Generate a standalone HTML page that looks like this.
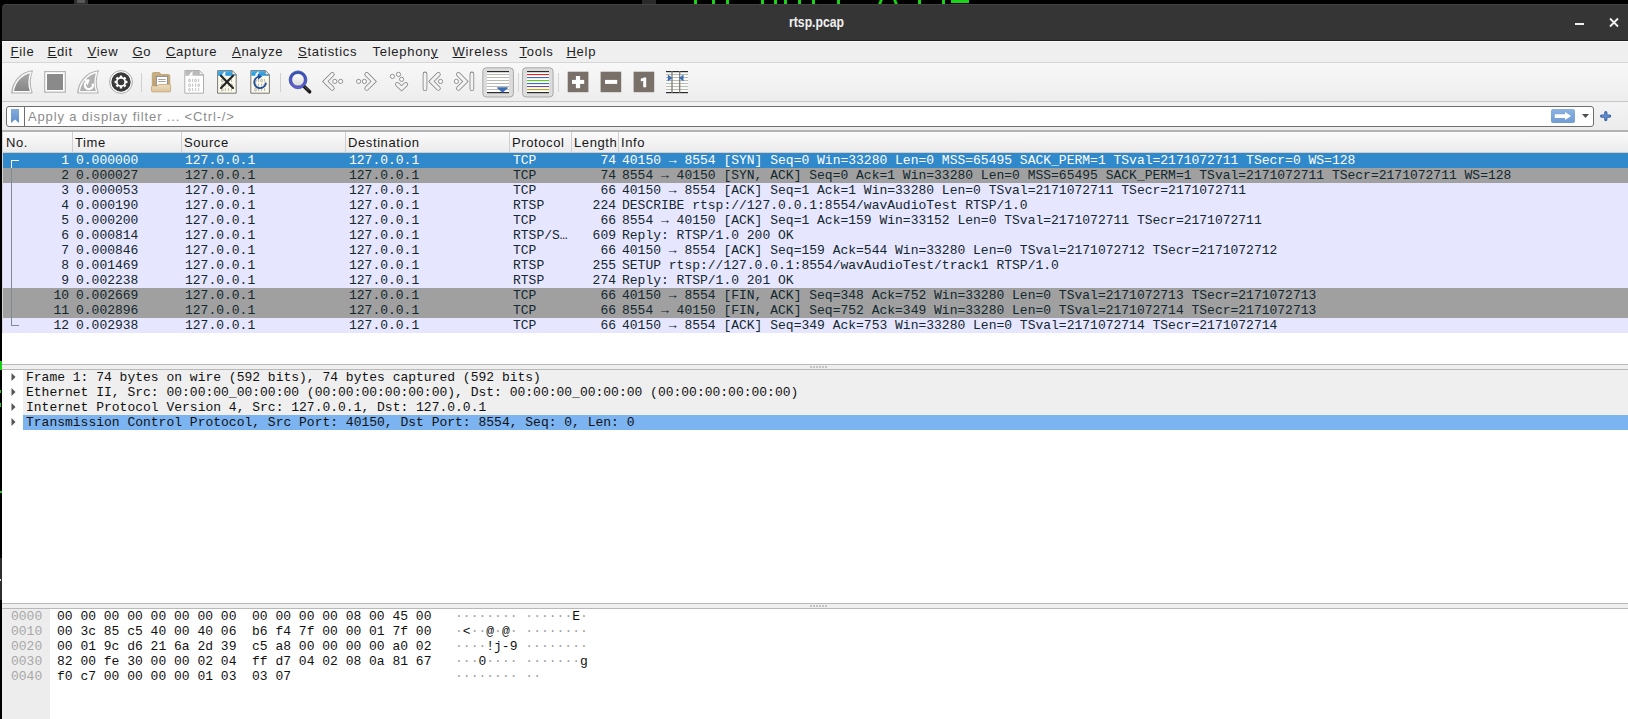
<!DOCTYPE html>
<html><head><meta charset="utf-8">
<style>
*{margin:0;padding:0;box-sizing:border-box}
html,body{width:1628px;height:719px;overflow:hidden;background:#000}
body{position:relative;font-family:"Liberation Sans",sans-serif}
.a{position:absolute}
.m{font-family:"Liberation Mono",monospace;font-size:13px;line-height:15px;white-space:pre;position:absolute}
.mi{position:absolute;top:44px;font-size:13px;line-height:15px;color:#1e1e1e;letter-spacing:0.72px;white-space:pre}
.mi u{text-decoration:underline;text-underline-offset:1px;text-decoration-thickness:1px}
.hd{position:absolute;top:132px;height:20px;font-size:13px;line-height:15px;color:#161616;letter-spacing:0.6px;white-space:pre;padding-top:3px}
.row{position:absolute;left:3px;width:1625px;height:15px;color:#12272e}
.sel{background:#3089cb;color:#fff}
.g{background:#a0a0a0}
.p{background:#e7e6ff}
svg{position:absolute;overflow:visible}
</style></head><body>

<div class="a" style="left:2px;top:4px;width:1626px;height:37px;background:#353535;border-top-left-radius:4px;border-bottom:1px solid #1f1f1f;border-top:1px solid #424242"></div>
<div class="a" style="left:789px;top:13px;width:56px;height:18px;overflow:visible;white-space:nowrap"><span style="display:inline-block;transform-origin:0 0;transform:scaleX(0.815);font-size:15px;line-height:18px;font-weight:bold;color:#f0f0f0">rtsp.pcap</span></div>
<div class="a" style="left:1575px;top:23px;width:9px;height:2px;background:#f0f0f0"></div>
<svg style="left:1609px;top:18px" width="10" height="9"><path d="M1 0.5 L9 8.5 M9 0.5 L1 8.5" stroke="#f0f0f0" stroke-width="1.8"/></svg>
<div class="a" style="left:74px;top:0;width:14px;height:4px;background:#2e2e2e"></div>
<div class="a" style="left:77px;top:0;width:8px;height:3px;background:#585858"></div>
<div class="a" style="left:642px;top:0;width:14px;height:4px;background:#2a2a2a"></div>
<div class="a" style="left:694px;top:0;width:3px;height:4px;background:#1ad21a"></div>
<div class="a" style="left:712px;top:0;width:3px;height:4px;background:#1ad21a"></div>
<div class="a" style="left:726px;top:0;width:3px;height:4px;background:#1ad21a"></div>
<div class="a" style="left:761px;top:0;width:3px;height:4px;background:#1ad21a"></div>
<div class="a" style="left:774px;top:0;width:3px;height:4px;background:#1ad21a"></div>
<div class="a" style="left:784px;top:0;width:3px;height:4px;background:#1ad21a"></div>
<div class="a" style="left:798px;top:0;width:3px;height:4px;background:#1ad21a"></div>
<div class="a" style="left:812px;top:0;width:3px;height:4px;background:#1ad21a"></div>
<div class="a" style="left:837px;top:0;width:3px;height:4px;background:#1ad21a"></div>
<div class="a" style="left:942px;top:0;width:3px;height:4px;background:#1ad21a"></div>
<div class="a" style="left:918px;top:0;width:3px;height:4px;background:#1ad21a"></div>
<div class="a" style="left:879px;top:0;width:3px;height:4px;background:#1ad21a;transform:skewX(-20deg)"></div>
<div class="a" style="left:894px;top:0;width:3px;height:4px;background:#1ad21a;transform:skewX(20deg)"></div>
<div class="a" style="left:951px;top:0;width:18px;height:3px;background:#1ad21a"></div>
<div class="a" style="left:2px;top:41px;width:1626px;height:21px;background:#efefef;border-top:1px solid #fafafa"></div>
<div class="a" style="left:2px;top:62px;width:1626px;height:1px;background:#d6d6d6"></div>
<span class="mi" style="left:10.5px"><u>F</u>ile</span>
<span class="mi" style="left:47.5px"><u>E</u>dit</span>
<span class="mi" style="left:87.5px"><u>V</u>iew</span>
<span class="mi" style="left:132.5px"><u>G</u>o</span>
<span class="mi" style="left:166px"><u>C</u>apture</span>
<span class="mi" style="left:232px"><u>A</u>nalyze</span>
<span class="mi" style="left:298px"><u>S</u>tatistics</span>
<span class="mi" style="left:372.5px">Telephon<u>y</u></span>
<span class="mi" style="left:452.5px"><u>W</u>ireless</span>
<span class="mi" style="left:519.5px"><u>T</u>ools</span>
<span class="mi" style="left:566.5px"><u>H</u>elp</span>
<div class="a" style="left:2px;top:63px;width:1626px;height:38px;background:linear-gradient(#f8f8f8,#ededed)"></div>
<div class="a" style="left:2px;top:101px;width:1626px;height:1px;background:#c6c6c6"></div>
<svg style="left:0;top:0" width="700" height="102" viewBox="0 0 700 102">
<defs>
<linearGradient id="fin" x1="0" y1="0" x2="0" y2="1"><stop offset="0" stop-color="#a9a9a9"/><stop offset="1" stop-color="#858585"/></linearGradient>
<linearGradient id="fold" x1="0" y1="0" x2="0" y2="1"><stop offset="0" stop-color="#c9b184"/><stop offset="1" stop-color="#b89b68"/></linearGradient>
<linearGradient id="front" x1="0" y1="0" x2="0" y2="1"><stop offset="0" stop-color="#eddcbf"/><stop offset="1" stop-color="#dcc39c"/></linearGradient>
<linearGradient id="ring" x1="0" y1="0" x2="0" y2="1"><stop offset="0" stop-color="#3550b8"/><stop offset="1" stop-color="#6460d6"/></linearGradient>
<linearGradient id="lens" x1="0" y1="0" x2="0" y2="1"><stop offset="0" stop-color="#ffffff"/><stop offset="1" stop-color="#d8d8d8"/></linearGradient>
<linearGradient id="blueband" x1="0" y1="0" x2="0" y2="1"><stop offset="0" stop-color="#49aee8"/><stop offset="1" stop-color="#1d95dc"/></linearGradient>
</defs>
<!-- start fin -->
<path d="M11.8 92.8 C12.8 82 20 72.5 32.3 70.8 C29.6 77.5 29.6 86 32 92.8 Z" fill="url(#fin)" stroke="#b3b3b3" stroke-width="1.3" stroke-linejoin="round"/>
<path d="M13.3 91.8 C14.3 82.6 20.8 74.2 30.9 72.2 C28.5 79 28.5 86 30.7 91.8 Z" fill="url(#fin)" stroke="#fafafa" stroke-width="1.4" stroke-linejoin="round"/>
<!-- stop -->
<rect x="44.7" y="71.6" width="20.6" height="20.6" fill="#fff" stroke="#b3b3b3" stroke-width="1.2"/>
<rect x="47" y="74" width="16" height="16" fill="#8a8a8a"/>
<!-- restart fin -->
<path d="M77.8 92.8 C78.8 82 86 72.5 98.3 70.8 C95.6 77.5 95.6 86 98 92.8 Z" fill="#b1b1b1" stroke="#b3b3b3" stroke-width="1.3" stroke-linejoin="round"/>
<path d="M79.3 91.8 C80.3 82.6 86.8 74.2 96.9 72.2 C94.5 79 94.5 86 96.7 91.8 Z" fill="#b1b1b1" stroke="#fafafa" stroke-width="1.4" stroke-linejoin="round"/>
<path d="M87 81.6 A4 4 0 1 0 92.6 83.6" fill="none" stroke="#fff" stroke-width="2.3"/>
<path d="M84.4 79.2 L89.8 79.6 L87.6 85.4 Z" fill="#fff"/>
<!-- gear -->
<circle cx="121" cy="82" r="11.4" fill="#fff" stroke="#a0a0a0" stroke-width="0.9"/>
<circle cx="121" cy="82" r="9.7" fill="#3a3a3a"/>
<g fill="#fff">
<circle cx="121" cy="82" r="5"/>
<rect x="119.8" y="75.6" width="2.4" height="12.8" rx="0.5"/>
<rect x="119.8" y="75.6" width="2.4" height="12.8" rx="0.5" transform="rotate(45 121 82)"/>
<rect x="119.8" y="75.6" width="2.4" height="12.8" rx="0.5" transform="rotate(90 121 82)"/>
<rect x="119.8" y="75.6" width="2.4" height="12.8" rx="0.5" transform="rotate(135 121 82)"/>
</g>
<circle cx="121" cy="82" r="3.3" fill="#3a3a3a"/>
<!-- separator -->
<rect x="141" y="73" width="1" height="19" fill="#d0d0d0"/>
<!-- folder -->
<path d="M152.3 91 V73.8 Q152.3 72.5 153.6 72.5 H159.5 L161.2 74.5 H168.6 Q169.8 74.5 169.8 75.8 V91 Z" fill="url(#fold)" stroke="#b8a070" stroke-width="0.8"/>
<rect x="156.4" y="76.4" width="11" height="9" fill="#fff" stroke="#8a8a8a" stroke-width="0.9"/>
<rect x="158.2" y="79" width="7.4" height="0.9" fill="#9a9a90"/>
<rect x="158.2" y="81.1" width="7.4" height="0.9" fill="#9a9a90"/>
<path d="M151.5 87 Q151.5 86 152.5 86 H157 L158.8 84.5 H169.5 Q170.6 84.5 170.6 85.5 V90.8 Q170.6 91.9 169.5 91.9 H152.6 Q151.5 91.9 151.5 90.8 Z" fill="url(#front)" stroke="#c3a878" stroke-width="0.8"/>
<!-- doc grey -->
<path d="M184.8 70.5 H199.3 L203.5 74.7 V93.2 H184.8 Z" fill="#fff" stroke="#b0b0b0" stroke-width="1"/>
<path d="M185.3 71 H199 L203 75 V75.8 H185.3 Z" fill="#bababa"/>
<path d="M189 75.8 C189.5 73.5 191 72 193 71.2 C192.3 72.8 192.3 74.5 192.8 75.8 Z" fill="#fff"/>
<path d="M199.3 70.5 V74.7 H203.5 Z" fill="#f3f3f3" stroke="#b0b0b0" stroke-width="0.8"/>
<g fill="none" stroke="#a8a8a8" stroke-width="0.7"><rect x="188.65" y="79.25" width="1.7" height="2.6" rx="0.8"/><path d="M192.55 78.90 V81.90"/><rect x="194.75" y="79.25" width="1.7" height="2.6" rx="0.8"/><path d="M198.65 78.90 V81.90"/><rect x="188.65" y="83.95" width="1.7" height="2.6" rx="0.8"/><path d="M192.55 83.60 V86.60"/><path d="M195.60 83.60 V86.60"/><rect x="197.80" y="83.95" width="1.7" height="2.6" rx="0.8"/><rect x="188.65" y="88.45" width="1.7" height="2.6" rx="0.8"/><path d="M192.55 88.10 V91.10"/><path d="M195.60 88.10 V91.10"/><path d="M198.65 88.10 V91.10"/></g>
<!-- doc X -->
<path d="M217.6 70.6 H232.2 L236.2 74.6 V93.2 H217.6 Z" fill="#fbfaea" stroke="#787878" stroke-width="1"/>
<path d="M218.1 71.1 H232 L235.7 74.8 V75.8 H218.1 Z" fill="url(#blueband)"/>
<path d="M221.8 75.8 C222.3 73.5 223.8 72 225.8 71.2 C225.1 72.8 225.1 74.5 225.6 75.8 Z" fill="#fff"/>
<path d="M232.2 70.6 V74.6 H236.2 Z" fill="#f5f5f5" stroke="#787878" stroke-width="0.7"/>
<g fill="none" stroke="#9a9a90" stroke-width="0.7"><rect x="221.45" y="79.25" width="1.7" height="2.6" rx="0.8"/><path d="M225.35 78.90 V81.90"/><rect x="227.55" y="79.25" width="1.7" height="2.6" rx="0.8"/><path d="M231.45 78.90 V81.90"/><rect x="221.45" y="83.95" width="1.7" height="2.6" rx="0.8"/><path d="M225.35 83.60 V86.60"/><path d="M228.40 83.60 V86.60"/><rect x="230.60" y="83.95" width="1.7" height="2.6" rx="0.8"/><rect x="221.45" y="88.45" width="1.7" height="2.6" rx="0.8"/><path d="M225.35 88.10 V91.10"/><path d="M228.40 88.10 V91.10"/><path d="M231.45 88.10 V91.10"/></g>
<path d="M221 75.8 L233 88 M233 75.8 L221 88" stroke="#232323" stroke-width="2.1" stroke-linecap="round"/>
<!-- doc reload -->
<path d="M250.8 70.6 H265.4 L269.4 74.6 V93.2 H250.8 Z" fill="#fbfaea" stroke="#787878" stroke-width="1"/>
<path d="M251.3 71.1 H265.2 L268.9 74.8 V75.8 H251.3 Z" fill="url(#blueband)"/>
<path d="M255 75.8 C255.5 73.5 257 72 259 71.2 C258.3 72.8 258.3 74.5 258.8 75.8 Z" fill="#fff"/>
<path d="M265.4 70.6 V74.6 H269.4 Z" fill="#f5f5f5" stroke="#787878" stroke-width="0.7"/>
<g fill="none" stroke="#9a9a90" stroke-width="0.7"><rect x="254.65" y="79.25" width="1.7" height="2.6" rx="0.8"/><path d="M258.55 78.90 V81.90"/><rect x="260.75" y="79.25" width="1.7" height="2.6" rx="0.8"/><path d="M264.65 78.90 V81.90"/><rect x="254.65" y="83.95" width="1.7" height="2.6" rx="0.8"/><path d="M258.55 83.60 V86.60"/><path d="M261.60 83.60 V86.60"/><rect x="263.80" y="83.95" width="1.7" height="2.6" rx="0.8"/><rect x="254.65" y="88.45" width="1.7" height="2.6" rx="0.8"/><path d="M258.55 88.10 V91.10"/><path d="M261.60 88.10 V91.10"/><path d="M264.65 88.10 V91.10"/></g>
<path d="M259 76.6 A5.8 5.8 0 1 0 265.9 82.6" fill="none" stroke="#1d4c9c" stroke-width="1.9"/>
<path d="M257.8 73.8 L262.2 76.6 L258 79.4 Z" fill="#1d4c9c"/>
<!-- separator -->
<rect x="280" y="73" width="1" height="19" fill="#d0d0d0"/>
<!-- magnifier -->
<path d="M303.4 85.8 L309.6 91.8" stroke="#1c1c1c" stroke-width="3.6" stroke-linecap="round"/>
<path d="M304.6 86.4 L308.6 90.2" stroke="#7a6a5a" stroke-width="0.8"/>
<circle cx="298" cy="79.8" r="6.6" fill="url(#lens)"/>
<circle cx="298" cy="79.8" r="7.6" fill="none" stroke="url(#ring)" stroke-width="2.6"/>
<circle cx="298" cy="79.8" r="8.9" fill="none" stroke="#2a44a0" stroke-width="0.7"/>
<circle cx="298" cy="79.8" r="6.3" fill="none" stroke="#26337a" stroke-width="0.6"/>
<!-- chevrons -->
<g fill="none" stroke-linecap="round" stroke-linejoin="miter">
<g stroke="#808080" stroke-width="4.6">
<path d="M332.3 74.4 L325.3 81.4 L332.3 88.4"/>
<path d="M366.7 74.4 L373.7 81.4 L366.7 88.4"/>
<path d="M397.4 84.4 L401.6 88.4 L405.8 84.4"/>
<path d="M425 73.9 V88.8"/>
<path d="M438.4 74.4 L431.4 81.4 L438.4 88.4"/>
<path d="M471.9 73.9 V88.8"/>
<path d="M458.4 74.4 L465.4 81.4 L458.4 88.4"/>
</g>
<g stroke="#f3f3f3" stroke-width="3">
<path d="M332.3 74.4 L325.3 81.4 L332.3 88.4"/>
<path d="M366.7 74.4 L373.7 81.4 L366.7 88.4"/>
<path d="M397.4 84.4 L401.6 88.4 L405.8 84.4"/>
<path d="M425 73.9 V88.8"/>
<path d="M438.4 74.4 L431.4 81.4 L438.4 88.4"/>
<path d="M471.9 73.9 V88.8"/>
<path d="M458.4 74.4 L465.4 81.4 L458.4 88.4"/>
</g>
</g>
<g fill="#fafafa" stroke="#858585" stroke-width="0.9">
<circle cx="334.8" cy="81.4" r="2.1"/><circle cx="340.6" cy="81.4" r="2.1"/>
<circle cx="358.6" cy="81.4" r="2.1"/><circle cx="364.4" cy="81.4" r="2.1"/>
<circle cx="392.4" cy="76.4" r="2.1"/><circle cx="398.5" cy="74.4" r="2.1"/><circle cx="401.6" cy="79.3" r="2.1"/>
<circle cx="440.5" cy="81.4" r="2.1"/>
<circle cx="456.4" cy="81.4" r="2.1"/>
</g>
<!-- autoscroll toggle -->
<rect x="482.8" y="67.8" width="30.6" height="29.2" rx="3.5" fill="#dcdcdc" stroke="#a9a9a9" stroke-width="1"/>
<rect x="487" y="72" width="22" height="20.5" fill="#fff"/>
<g fill="#b9bcb2"><rect x="487" y="74" width="22" height="1"/><rect x="487" y="77" width="22" height="1"/><rect x="487" y="80" width="22" height="1"/><rect x="487" y="83" width="22" height="1"/><rect x="487" y="86" width="22" height="1"/><rect x="487" y="89" width="22" height="1"/></g>
<rect x="487" y="71" width="22" height="1.2" fill="#2a2a2a"/><rect x="487" y="92" width="22" height="1.2" fill="#2a2a2a"/>
<path d="M497.6 87.3 H507.4 Q508.4 87.3 507.6 88.2 L502.5 92.8 L497.4 88.2 Q496.6 87.3 497.6 87.3 Z" fill="#3a6db5"/>
<rect x="518" y="73" width="1" height="19" fill="#d6d6d6"/>
<!-- colorize toggle -->
<rect x="522.5" y="67.8" width="30.6" height="29.2" rx="3.5" fill="#dcdcdc" stroke="#a9a9a9" stroke-width="1"/>
<rect x="527" y="72" width="22" height="20.5" fill="#fff"/>
<rect x="527" y="71" width="22" height="1.2" fill="#2a2a2a"/>
<rect x="527" y="74" width="22" height="1.1" fill="#ec2424"/>
<rect x="527" y="77" width="22" height="1.1" fill="#3b6db8"/>
<rect x="527" y="80" width="22" height="1.1" fill="#5fcf12"/>
<rect x="527" y="83" width="22" height="1.1" fill="#3b6db8"/>
<rect x="527" y="86" width="22" height="1.1" fill="#6d4c8e"/>
<rect x="527" y="89" width="22" height="1.1" fill="#c9a208"/>
<rect x="527" y="92" width="22" height="1.2" fill="#2a2a2a"/>
<rect x="558" y="73" width="1" height="19" fill="#d6d6d6"/>
<!-- zoom icons -->
<rect x="567.7" y="71.7" width="20.7" height="20.5" fill="#7a706a"/>
<rect x="572" y="79.9" width="12.2" height="4" fill="#fff"/><rect x="575.9" y="76" width="4.2" height="12.2" fill="#fff"/>
<rect x="600.6" y="71.7" width="20.6" height="20.5" fill="#7a706a"/>
<rect x="605" y="79.9" width="12.2" height="4" fill="#fff"/>
<rect x="633.6" y="71.7" width="20.6" height="20.5" fill="#7a706a"/>
<path d="M640.8 78.8 L644.2 77.4 H646.2 V87.2 H643.2 V80.8 L640.8 81.6 Z" fill="#fff"/>
<!-- resize columns -->
<rect x="666" y="71.5" width="22" height="21" fill="#fafafa"/>
<g fill="#b9bcb2"><rect x="666" y="74" width="22" height="1"/><rect x="666" y="77" width="22" height="1"/><rect x="666" y="80" width="22" height="1"/><rect x="666" y="83" width="22" height="1"/><rect x="666" y="86" width="22" height="1"/><rect x="666" y="89" width="22" height="1"/></g>
<rect x="666" y="71" width="22" height="1.2" fill="#2a2a2a"/><rect x="666" y="92" width="22" height="1.2" fill="#2a2a2a"/>
<rect x="671.4" y="71" width="1.2" height="22" fill="#77776f"/><rect x="679.1" y="71" width="1.2" height="22" fill="#77776f"/>
<path d="M667.8 75.2 Q668 74.8 668.5 75.1 L672.3 78.1 L668.5 81.1 Q668 81.4 667.8 81 Z" fill="#3a6db5"/>
<path d="M683.5 75.2 Q683.3 74.8 682.8 75.1 L679.2 78.1 L682.8 81.1 Q683.3 81.4 683.5 81 Z" fill="#3a6db5"/>
</svg>

<div class="a" style="left:2px;top:102px;width:1626px;height:28px;background:linear-gradient(#f3f3f3,#ececec)"></div>
<div class="a" style="left:6px;top:106px;width:1588px;height:21px;background:#fff;border:1px solid #6f6f6f;border-radius:3px"></div>
<div class="a" style="left:24px;top:107px;width:1px;height:19px;background:#6f6f6f"></div>
<svg style="left:10px;top:109px" width="10" height="14"><defs><linearGradient id="bm" x1="0" y1="0" x2="0" y2="1"><stop offset="0" stop-color="#86acd9"/><stop offset="1" stop-color="#5b8fd0"/></linearGradient></defs><path d="M1 0 H9 V14 L5 10.5 L1 14 Z" fill="url(#bm)"/></svg>
<div class="a" style="left:28px;top:109px;font-size:13px;line-height:15px;color:#8c8c8c;letter-spacing:0.85px;white-space:pre">Apply a display filter ... &lt;Ctrl-/&gt;</div>
<div class="a" style="left:1551px;top:109px;width:24px;height:14px;background:linear-gradient(#8db2e0,#6e9dd4);border-radius:2px"></div>
<svg style="left:1554px;top:110px" width="18" height="12"><path d="M0.8 4.3 H11.1 V2 L17.1 6 L11.1 9.9 V7.9 H0.8 Z" fill="#fff"/></svg>
<svg style="left:1582px;top:114px" width="8" height="5"><path d="M0 0 H7 L3.5 4 Z" fill="#505050"/></svg>
<svg style="left:1600px;top:111px" width="12" height="11"><path d="M5.8 1.6 V8.6 M1.6 5.1 H9.6" stroke="#3a64aa" stroke-width="3.2" stroke-linecap="round"/><path d="M5.8 1.8 V8.4 M1.8 5.1 H9.4" stroke="#6a98d6" stroke-width="1.1"/></svg>
<div class="a" style="left:2px;top:130px;width:1626px;height:2px;background:#b3b3b3"></div>
<div class="a" style="left:2px;top:132px;width:1626px;height:232px;background:#fff"></div>
<div class="a" style="left:3px;top:132px;width:1625px;height:21px;background:linear-gradient(#fbfbfb,#ebebeb);border-bottom:1px solid #d3cdc8"></div>
<div class="hd" style="left:3px;width:69px;overflow:hidden;padding-left:3px">No.</div>
<div class="hd" style="left:72px;width:109px;overflow:hidden;padding-left:3px">Time</div>
<div class="a" style="left:72px;top:132px;width:1px;height:20px;background:#cfcfcf"></div>
<div class="hd" style="left:181px;width:164px;overflow:hidden;padding-left:3px">Source</div>
<div class="a" style="left:181px;top:132px;width:1px;height:20px;background:#cfcfcf"></div>
<div class="hd" style="left:345px;width:164px;overflow:hidden;padding-left:3px">Destination</div>
<div class="a" style="left:345px;top:132px;width:1px;height:20px;background:#cfcfcf"></div>
<div class="hd" style="left:509px;width:62px;overflow:hidden;padding-left:3px">Protocol</div>
<div class="a" style="left:509px;top:132px;width:1px;height:20px;background:#cfcfcf"></div>
<div class="hd" style="left:571px;width:47px;overflow:hidden;padding-left:3px">Length</div>
<div class="a" style="left:571px;top:132px;width:1px;height:20px;background:#cfcfcf"></div>
<div class="hd" style="left:618px;width:1010px;overflow:hidden;padding-left:3px">Info</div>
<div class="a" style="left:618px;top:132px;width:1px;height:20px;background:#cfcfcf"></div>
<div class="row sel" style="top:153px">
<span class="m" style="right:1559px;top:0">1</span>
<span class="m" style="left:73px;top:0">0.000000</span>
<span class="m" style="left:182px;top:0">127.0.0.1</span>
<span class="m" style="left:346px;top:0">127.0.0.1</span>
<span class="m" style="left:510px;top:0">TCP</span>
<span class="m" style="right:1012px;top:0">74</span>
<span class="m" style="left:619px;top:0">40150 → 8554 [SYN] Seq=0 Win=33280 Len=0 MSS=65495 SACK_PERM=1 TSval=2171072711 TSecr=0 WS=128</span>
</div>
<div class="row g" style="top:168px">
<span class="m" style="right:1559px;top:0">2</span>
<span class="m" style="left:73px;top:0">0.000027</span>
<span class="m" style="left:182px;top:0">127.0.0.1</span>
<span class="m" style="left:346px;top:0">127.0.0.1</span>
<span class="m" style="left:510px;top:0">TCP</span>
<span class="m" style="right:1012px;top:0">74</span>
<span class="m" style="left:619px;top:0">8554 → 40150 [SYN, ACK] Seq=0 Ack=1 Win=33280 Len=0 MSS=65495 SACK_PERM=1 TSval=2171072711 TSecr=2171072711 WS=128</span>
</div>
<div class="row p" style="top:183px">
<span class="m" style="right:1559px;top:0">3</span>
<span class="m" style="left:73px;top:0">0.000053</span>
<span class="m" style="left:182px;top:0">127.0.0.1</span>
<span class="m" style="left:346px;top:0">127.0.0.1</span>
<span class="m" style="left:510px;top:0">TCP</span>
<span class="m" style="right:1012px;top:0">66</span>
<span class="m" style="left:619px;top:0">40150 → 8554 [ACK] Seq=1 Ack=1 Win=33280 Len=0 TSval=2171072711 TSecr=2171072711</span>
</div>
<div class="row p" style="top:198px">
<span class="m" style="right:1559px;top:0">4</span>
<span class="m" style="left:73px;top:0">0.000190</span>
<span class="m" style="left:182px;top:0">127.0.0.1</span>
<span class="m" style="left:346px;top:0">127.0.0.1</span>
<span class="m" style="left:510px;top:0">RTSP</span>
<span class="m" style="right:1012px;top:0">224</span>
<span class="m" style="left:619px;top:0">DESCRIBE rtsp://127.0.0.1:8554/wavAudioTest RTSP/1.0</span>
</div>
<div class="row p" style="top:213px">
<span class="m" style="right:1559px;top:0">5</span>
<span class="m" style="left:73px;top:0">0.000200</span>
<span class="m" style="left:182px;top:0">127.0.0.1</span>
<span class="m" style="left:346px;top:0">127.0.0.1</span>
<span class="m" style="left:510px;top:0">TCP</span>
<span class="m" style="right:1012px;top:0">66</span>
<span class="m" style="left:619px;top:0">8554 → 40150 [ACK] Seq=1 Ack=159 Win=33152 Len=0 TSval=2171072711 TSecr=2171072711</span>
</div>
<div class="row p" style="top:228px">
<span class="m" style="right:1559px;top:0">6</span>
<span class="m" style="left:73px;top:0">0.000814</span>
<span class="m" style="left:182px;top:0">127.0.0.1</span>
<span class="m" style="left:346px;top:0">127.0.0.1</span>
<span class="m" style="left:510px;top:0">RTSP/S…</span>
<span class="m" style="right:1012px;top:0">609</span>
<span class="m" style="left:619px;top:0">Reply: RTSP/1.0 200 OK</span>
</div>
<div class="row p" style="top:243px">
<span class="m" style="right:1559px;top:0">7</span>
<span class="m" style="left:73px;top:0">0.000846</span>
<span class="m" style="left:182px;top:0">127.0.0.1</span>
<span class="m" style="left:346px;top:0">127.0.0.1</span>
<span class="m" style="left:510px;top:0">TCP</span>
<span class="m" style="right:1012px;top:0">66</span>
<span class="m" style="left:619px;top:0">40150 → 8554 [ACK] Seq=159 Ack=544 Win=33280 Len=0 TSval=2171072712 TSecr=2171072712</span>
</div>
<div class="row p" style="top:258px">
<span class="m" style="right:1559px;top:0">8</span>
<span class="m" style="left:73px;top:0">0.001469</span>
<span class="m" style="left:182px;top:0">127.0.0.1</span>
<span class="m" style="left:346px;top:0">127.0.0.1</span>
<span class="m" style="left:510px;top:0">RTSP</span>
<span class="m" style="right:1012px;top:0">255</span>
<span class="m" style="left:619px;top:0">SETUP rtsp://127.0.0.1:8554/wavAudioTest/track1 RTSP/1.0</span>
</div>
<div class="row p" style="top:273px">
<span class="m" style="right:1559px;top:0">9</span>
<span class="m" style="left:73px;top:0">0.002238</span>
<span class="m" style="left:182px;top:0">127.0.0.1</span>
<span class="m" style="left:346px;top:0">127.0.0.1</span>
<span class="m" style="left:510px;top:0">RTSP</span>
<span class="m" style="right:1012px;top:0">274</span>
<span class="m" style="left:619px;top:0">Reply: RTSP/1.0 201 OK</span>
</div>
<div class="row g" style="top:288px">
<span class="m" style="right:1559px;top:0">10</span>
<span class="m" style="left:73px;top:0">0.002669</span>
<span class="m" style="left:182px;top:0">127.0.0.1</span>
<span class="m" style="left:346px;top:0">127.0.0.1</span>
<span class="m" style="left:510px;top:0">TCP</span>
<span class="m" style="right:1012px;top:0">66</span>
<span class="m" style="left:619px;top:0">40150 → 8554 [FIN, ACK] Seq=348 Ack=752 Win=33280 Len=0 TSval=2171072713 TSecr=2171072713</span>
</div>
<div class="row g" style="top:303px">
<span class="m" style="right:1559px;top:0">11</span>
<span class="m" style="left:73px;top:0">0.002896</span>
<span class="m" style="left:182px;top:0">127.0.0.1</span>
<span class="m" style="left:346px;top:0">127.0.0.1</span>
<span class="m" style="left:510px;top:0">TCP</span>
<span class="m" style="right:1012px;top:0">66</span>
<span class="m" style="left:619px;top:0">8554 → 40150 [FIN, ACK] Seq=752 Ack=349 Win=33280 Len=0 TSval=2171072714 TSecr=2171072713</span>
</div>
<div class="row p" style="top:318px">
<span class="m" style="right:1559px;top:0">12</span>
<span class="m" style="left:73px;top:0">0.002938</span>
<span class="m" style="left:182px;top:0">127.0.0.1</span>
<span class="m" style="left:346px;top:0">127.0.0.1</span>
<span class="m" style="left:510px;top:0">TCP</span>
<span class="m" style="right:1012px;top:0">66</span>
<span class="m" style="left:619px;top:0">40150 → 8554 [ACK] Seq=349 Ack=753 Win=33280 Len=0 TSval=2171072714 TSecr=2171072714</span>
</div>
<div class="a" style="left:11px;top:160px;width:1px;height:165px;background:#7f8c92"></div>
<div class="a" style="left:11px;top:160px;width:8px;height:1px;background:#fff"></div>
<div class="a" style="left:11px;top:160px;width:1px;height:8px;background:#fff"></div>
<div class="a" style="left:11px;top:325px;width:8px;height:1px;background:#7f8c92"></div>
<div class="a" style="left:2px;top:132px;width:1px;height:201px;background:#d6d6d6"></div>
<div class="a" style="left:2px;top:364px;width:1626px;height:6px;background:#efefef;border-top:1px solid #b9b9b9;border-bottom:1px solid #b9b9b9"></div>
<div class="a" style="left:810px;top:366px;width:2px;height:2px;background:#b4b4b4;border-radius:1px"></div>
<div class="a" style="left:813px;top:366px;width:2px;height:2px;background:#b4b4b4;border-radius:1px"></div>
<div class="a" style="left:816px;top:366px;width:2px;height:2px;background:#b4b4b4;border-radius:1px"></div>
<div class="a" style="left:819px;top:366px;width:2px;height:2px;background:#b4b4b4;border-radius:1px"></div>
<div class="a" style="left:822px;top:366px;width:2px;height:2px;background:#b4b4b4;border-radius:1px"></div>
<div class="a" style="left:825px;top:366px;width:2px;height:2px;background:#b4b4b4;border-radius:1px"></div>
<div class="a" style="left:2px;top:370px;width:1626px;height:233px;background:#fff"></div>
<div class="a" style="left:23px;top:370px;width:1605px;height:45px;background:#efefef"></div>
<div class="a" style="left:23px;top:415px;width:1605px;height:15px;background:#7cb4f2"></div>
<svg style="left:11px;top:373px" width="5" height="8"><path d="M0.5 0 L4.5 4 L0.5 8 Z" fill="#555"/></svg>
<span class="m" style="left:26px;top:370px;color:#111">Frame 1: 74 bytes on wire (592 bits), 74 bytes captured (592 bits)</span>
<svg style="left:11px;top:388px" width="5" height="8"><path d="M0.5 0 L4.5 4 L0.5 8 Z" fill="#555"/></svg>
<span class="m" style="left:26px;top:385px;color:#111">Ethernet II, Src: 00:00:00_00:00:00 (00:00:00:00:00:00), Dst: 00:00:00_00:00:00 (00:00:00:00:00:00)</span>
<svg style="left:11px;top:403px" width="5" height="8"><path d="M0.5 0 L4.5 4 L0.5 8 Z" fill="#555"/></svg>
<span class="m" style="left:26px;top:400px;color:#111">Internet Protocol Version 4, Src: 127.0.0.1, Dst: 127.0.0.1</span>
<svg style="left:11px;top:418px" width="5" height="8"><path d="M0.5 0 L4.5 4 L0.5 8 Z" fill="#555"/></svg>
<span class="m" style="left:26px;top:415px;color:#111">Transmission Control Protocol, Src Port: 40150, Dst Port: 8554, Seq: 0, Len: 0</span>
<div class="a" style="left:2px;top:603px;width:1626px;height:6px;background:#efefef;border-top:1px solid #b9b9b9;border-bottom:1px solid #b9b9b9"></div>
<div class="a" style="left:810px;top:605px;width:2px;height:2px;background:#b4b4b4;border-radius:1px"></div>
<div class="a" style="left:813px;top:605px;width:2px;height:2px;background:#b4b4b4;border-radius:1px"></div>
<div class="a" style="left:816px;top:605px;width:2px;height:2px;background:#b4b4b4;border-radius:1px"></div>
<div class="a" style="left:819px;top:605px;width:2px;height:2px;background:#b4b4b4;border-radius:1px"></div>
<div class="a" style="left:822px;top:605px;width:2px;height:2px;background:#b4b4b4;border-radius:1px"></div>
<div class="a" style="left:825px;top:605px;width:2px;height:2px;background:#b4b4b4;border-radius:1px"></div>
<div class="a" style="left:2px;top:609px;width:1626px;height:110px;background:#fff"></div>
<div class="a" style="left:2px;top:609px;width:48px;height:110px;background:#ededed"></div>
<span class="m" style="left:11px;top:609px;color:#a8a8a8">0000</span>
<span class="m" style="left:57px;top:609px;color:#111">00 00 00 00 00 00 00 00  00 00 00 00 08 00 45 00</span>
<span class="m" style="left:455px;top:609px;color:#111"><span style="color:#a0a0a0">·</span><span style="color:#a0a0a0">·</span><span style="color:#a0a0a0">·</span><span style="color:#a0a0a0">·</span><span style="color:#a0a0a0">·</span><span style="color:#a0a0a0">·</span><span style="color:#a0a0a0">·</span><span style="color:#a0a0a0">·</span> <span style="color:#a0a0a0">·</span><span style="color:#a0a0a0">·</span><span style="color:#a0a0a0">·</span><span style="color:#a0a0a0">·</span><span style="color:#a0a0a0">·</span><span style="color:#a0a0a0">·</span>E<span style="color:#a0a0a0">·</span></span>
<span class="m" style="left:11px;top:624px;color:#a8a8a8">0010</span>
<span class="m" style="left:57px;top:624px;color:#111">00 3c 85 c5 40 00 40 06  b6 f4 7f 00 00 01 7f 00</span>
<span class="m" style="left:455px;top:624px;color:#111"><span style="color:#a0a0a0">·</span>&lt;<span style="color:#a0a0a0">·</span><span style="color:#a0a0a0">·</span>@<span style="color:#a0a0a0">·</span>@<span style="color:#a0a0a0">·</span> <span style="color:#a0a0a0">·</span><span style="color:#a0a0a0">·</span><span style="color:#a0a0a0">·</span><span style="color:#a0a0a0">·</span><span style="color:#a0a0a0">·</span><span style="color:#a0a0a0">·</span><span style="color:#a0a0a0">·</span><span style="color:#a0a0a0">·</span></span>
<span class="m" style="left:11px;top:639px;color:#a8a8a8">0020</span>
<span class="m" style="left:57px;top:639px;color:#111">00 01 9c d6 21 6a 2d 39  c5 a8 00 00 00 00 a0 02</span>
<span class="m" style="left:455px;top:639px;color:#111"><span style="color:#a0a0a0">·</span><span style="color:#a0a0a0">·</span><span style="color:#a0a0a0">·</span><span style="color:#a0a0a0">·</span>!j-9 <span style="color:#a0a0a0">·</span><span style="color:#a0a0a0">·</span><span style="color:#a0a0a0">·</span><span style="color:#a0a0a0">·</span><span style="color:#a0a0a0">·</span><span style="color:#a0a0a0">·</span><span style="color:#a0a0a0">·</span><span style="color:#a0a0a0">·</span></span>
<span class="m" style="left:11px;top:654px;color:#a8a8a8">0030</span>
<span class="m" style="left:57px;top:654px;color:#111">82 00 fe 30 00 00 02 04  ff d7 04 02 08 0a 81 67</span>
<span class="m" style="left:455px;top:654px;color:#111"><span style="color:#a0a0a0">·</span><span style="color:#a0a0a0">·</span><span style="color:#a0a0a0">·</span>0<span style="color:#a0a0a0">·</span><span style="color:#a0a0a0">·</span><span style="color:#a0a0a0">·</span><span style="color:#a0a0a0">·</span> <span style="color:#a0a0a0">·</span><span style="color:#a0a0a0">·</span><span style="color:#a0a0a0">·</span><span style="color:#a0a0a0">·</span><span style="color:#a0a0a0">·</span><span style="color:#a0a0a0">·</span><span style="color:#a0a0a0">·</span>g</span>
<span class="m" style="left:11px;top:669px;color:#a8a8a8">0040</span>
<span class="m" style="left:57px;top:669px;color:#111">f0 c7 00 00 00 00 01 03  03 07</span>
<span class="m" style="left:455px;top:669px;color:#111"><span style="color:#a0a0a0">·</span><span style="color:#a0a0a0">·</span><span style="color:#a0a0a0">·</span><span style="color:#a0a0a0">·</span><span style="color:#a0a0a0">·</span><span style="color:#a0a0a0">·</span><span style="color:#a0a0a0">·</span><span style="color:#a0a0a0">·</span> <span style="color:#a0a0a0">·</span><span style="color:#a0a0a0">·</span></span>
<div class="a" style="left:0;top:361px;width:2px;height:9px;background:#19d019"></div>
<div class="a" style="left:0;top:390px;width:1px;height:3px;background:#19d019"></div>
<div class="a" style="left:0;top:403px;width:1px;height:4px;background:#19d019"></div>
<div class="a" style="left:0;top:491px;width:2px;height:2px;background:#19d019"></div>
<div class="a" style="left:0;top:558px;width:2px;height:42px;background:#2e2e2e"></div>
<div class="a" style="left:0;top:579px;width:1px;height:2px;background:#ddd"></div>
</body></html>
